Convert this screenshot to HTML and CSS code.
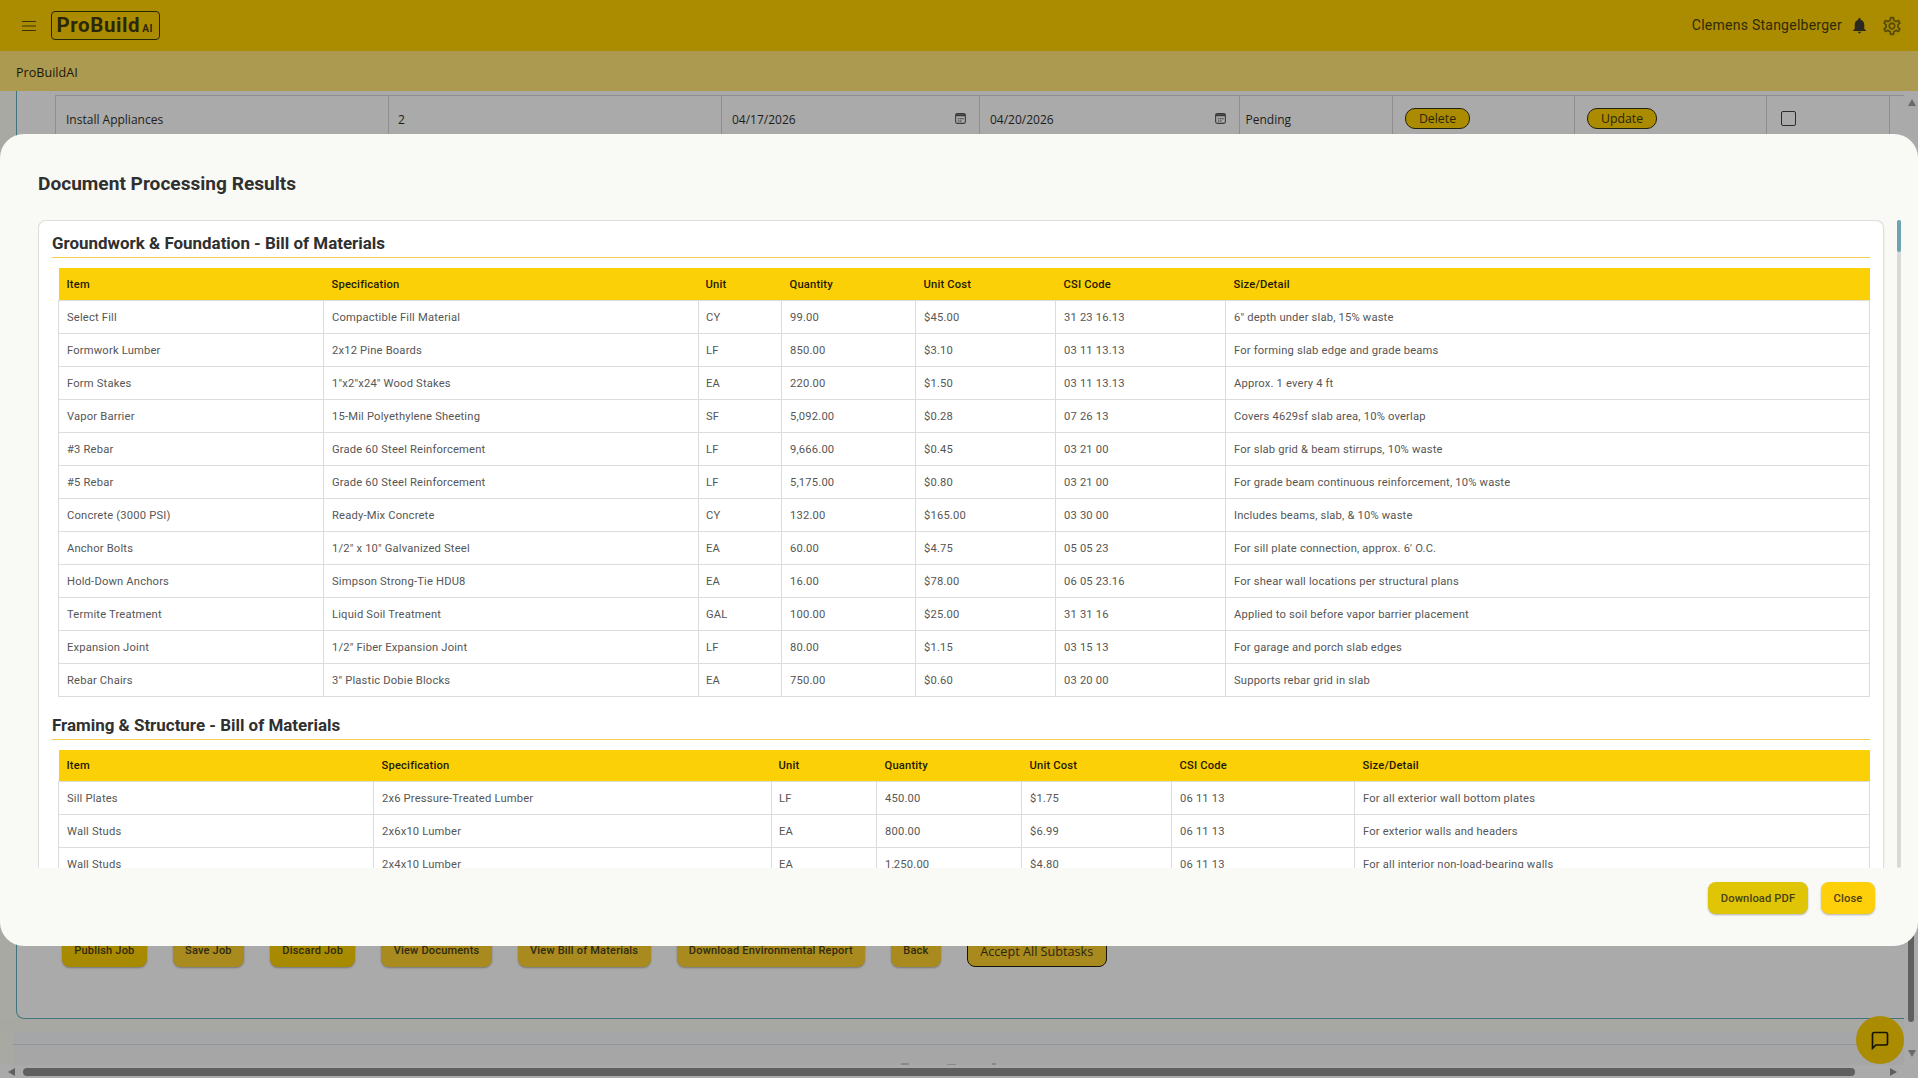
FILE: index.html
```html
<!DOCTYPE html>
<html lang="en">
<head>
<meta charset="utf-8">
<title>ProBuildAI</title>
<link rel="stylesheet" href="styles.css">
</head>
<body>
<div class="app">
  <header class="topbar">
    <svg class="menu-icon" viewBox="0 0 14 10" aria-hidden="true"><path d="M0 .5h14M0 5h14M0 9.500h14"/></svg>
    <div class="logo"><span class="logo-main">ProBuild</span><span class="logo-ai">AI</span></div>
    <div class="user">
      <span class="user-name">Clemens Stangelberger</span>
      <svg class="bell" viewBox="0 0 24 24" aria-hidden="true"><path d="M12 22c1.100 0 2-.9 2-2h-4c0 1.100.89 2 2 2zm6-6v-5c0-3.070-1.640-5.640-4.500-6.320V4c0-.83-.67-1.500-1.500-1.500s-1.500.67-1.500 1.500v.68C7.630 5.360 6 7.920 6 11v5l-2 2v1h16v-1l-2-2z"/></svg>
      <svg class="gear" viewBox="0 0 24 24" aria-hidden="true"><path d="M19.430 12.980c.04-.32.07-.64.07-.98 0-.34-.03-.66-.07-.98l2.110-1.650c.19-.15.24-.42.12-.64l-2-3.460c-.09-.16-.26-.25-.44-.25-.06 0-.12.01-.17.03l-2.490 1c-.52-.4-1.080-.73-1.690-.98l-.38-2.650C14.460 2.180 14.250 2 14 2h-4c-.25 0-.46.18-.49.42l-.38 2.650c-.61.25-1.170.59-1.690.98l-2.490-1c-.06-.02-.12-.03-.18-.03-.17 0-.34.09-.43.25l-2 3.460c-.13.22-.07.49.12.64l2.110 1.650c-.04.32-.07.65-.07.98 0 .33.03.66.07.98l-2.110 1.650c-.19.15-.24.42-.12.64l2 3.460c.09.16.26.25.44.25.06 0 .12-.01.17-.03l2.490-1c.52.4 1.080.73 1.690.98l.38 2.650c.03.24.24.42.49.42h4c.25 0 .46-.18.49-.42l.38-2.650c.61-.25 1.170-.59 1.690-.98l2.490 1c.06.02.12.03.18.03.17 0 .34-.09.43-.25l2-3.460c.12-.22.07-.49-.12-.64l-2.110-1.650zm-1.980-1.710c.04.31.05.52.05.73 0 .21-.02.43-.05.73l-.14 1.130.89.7 1.080.84-.7 1.210-1.270-.51-1.040-.42-.9.68c-.43.32-.84.56-1.250.73l-1.060.43-.16 1.130-.2 1.350h-1.400l-.19-1.350-.16-1.130-1.060-.43c-.43-.18-.83-.41-1.230-.71l-.91-.7-1.060.43-1.270.51-.7-1.210 1.080-.84.89-.7-.14-1.130c-.03-.31-.05-.54-.05-.74s.02-.43.05-.73l.14-1.130-.89-.7-1.080-.84.7-1.210 1.270.51 1.040.42.9-.68c.43-.32.84-.56 1.250-.73l1.060-.43.16-1.130.2-1.350h1.390l.19 1.350.16 1.130 1.060.43c.43.18.83.41 1.230.71l.91.7 1.060-.43 1.270-.51.7 1.210-1.070.85-.89.7.14 1.130zM12 8c-2.210 0-4 1.790-4 4s1.790 4 4 4 4-1.790 4-4-1.790-4-4-4zm0 6c-1.100 0-2-.9-2-2s.9-2 2-2 2 .9 2 2-.9 2-2 2z"/></svg>
    </div>
  </header>
  <div class="subbar">ProBuildAI</div>
  <div class="workspace">
    <div class="main">
      <section class="job-card">
        <div class="task-row">
          <div class="task-cell">Install Appliances</div>
          <div class="task-cell qty-cell">2</div>
          <div class="task-cell date-cell">04/17/2026
            <svg class="cal" viewBox="0 0 12 12" aria-hidden="true"><rect class="cal-line" x="1.500" y="1.500" width="9" height="9" rx="1.500"/><path class="cal-dots" d="M1.500 2h9v2h-9zM3.500 5.800h1.500v1h-1.500zM5.500 5.800h1.500v1h-1.500zM7.500 5.800h1.500v1h-1.500zM3.500 7.800h1.500v1h-1.500zM5.500 7.800h1.500v1h-1.500z"/></svg>
          </div>
          <div class="task-cell date-cell">04/20/2026
            <svg class="cal" viewBox="0 0 12 12" aria-hidden="true"><rect class="cal-line" x="1.500" y="1.500" width="9" height="9" rx="1.500"/><path class="cal-dots" d="M1.500 2h9v2h-9zM3.500 5.800h1.500v1h-1.500zM5.500 5.800h1.500v1h-1.500zM7.500 5.800h1.500v1h-1.500zM3.500 7.800h1.500v1h-1.500zM5.500 7.800h1.500v1h-1.500z"/></svg>
          </div>
          <div class="task-cell status-cell">Pending</div>
          <div class="task-cell btn-cell"><button class="pill pill-delete">Delete</button></div>
          <div class="task-cell btn-cell"><button class="pill pill-update">Update</button></div>
          <div class="task-cell check-cell"><span class="check"></span></div>
        </div>
        <div class="job-actions">
          <button class="job-btn strong">Publish Job</button>
          <button class="job-btn">Save Job</button>
          <button class="job-btn strong">Discard Job</button>
          <button class="job-btn">View Documents</button>
          <button class="job-btn">View Bill of Materials</button>
          <button class="job-btn">Download Environmental Report</button>
          <button class="job-btn">Back</button>
          <button class="accept-btn">Accept All Subtasks</button>
        </div>
      </section>
      <div class="band-a"></div>
      <div class="band-b"></div>
      <div class="band-c">
        <i class="mark m1"></i><i class="mark m2"></i><i class="mark m3"></i>
      </div>
      <div class="hscroll">
        <span class="arrow arrow-left"></span>
        <span class="hthumb"></span>
        <span class="arrow arrow-right"></span>
      </div>
    </div>
    <div class="vscroll">
      <span class="arrow arrow-up"></span>
      <span class="vthumb"></span>
      <span class="arrow arrow-down"></span>
    </div>
  </div>
</div>

<div class="modal">
  <h2 class="modal-title">Document Processing Results</h2>
  <div class="modal-body">
    <div class="results-card">
      <div class="section">
        <h3 class="section-title">Groundwork &amp; Foundation - Bill of Materials</h3>
        <table class="bom bom-a">
          <colgroup><col class="a1"><col class="a2"><col class="a3"><col class="a4"><col class="a5"><col class="a6"><col class="a7"></colgroup>
          <thead><tr><th>Item</th><th>Specification</th><th>Unit</th><th>Quantity</th><th>Unit Cost</th><th>CSI Code</th><th>Size/Detail</th></tr></thead>
          <tbody>
            <tr><td>Select Fill</td><td>Compactible Fill Material</td><td>CY</td><td>99.00</td><td>$45.00</td><td>31 23 16.13</td><td>6" depth under slab, 15% waste</td></tr>
            <tr><td>Formwork Lumber</td><td>2x12 Pine Boards</td><td>LF</td><td>850.00</td><td>$3.10</td><td>03 11 13.13</td><td>For forming slab edge and grade beams</td></tr>
            <tr><td>Form Stakes</td><td>1"x2"x24" Wood Stakes</td><td>EA</td><td>220.00</td><td>$1.50</td><td>03 11 13.13</td><td>Approx. 1 every 4 ft</td></tr>
            <tr><td>Vapor Barrier</td><td>15-Mil Polyethylene Sheeting</td><td>SF</td><td>5,092.00</td><td>$0.28</td><td>07 26 13</td><td>Covers 4629sf slab area, 10% overlap</td></tr>
            <tr><td>#3 Rebar</td><td>Grade 60 Steel Reinforcement</td><td>LF</td><td>9,666.00</td><td>$0.45</td><td>03 21 00</td><td>For slab grid &amp; beam stirrups, 10% waste</td></tr>
            <tr><td>#5 Rebar</td><td>Grade 60 Steel Reinforcement</td><td>LF</td><td>5,175.00</td><td>$0.80</td><td>03 21 00</td><td>For grade beam continuous reinforcement, 10% waste</td></tr>
            <tr><td>Concrete (3000 PSI)</td><td>Ready-Mix Concrete</td><td>CY</td><td>132.00</td><td>$165.00</td><td>03 30 00</td><td>Includes beams, slab, &amp; 10% waste</td></tr>
            <tr><td>Anchor Bolts</td><td>1/2" x 10" Galvanized Steel</td><td>EA</td><td>60.00</td><td>$4.75</td><td>05 05 23</td><td>For sill plate connection, approx. 6' O.C.</td></tr>
            <tr><td>Hold-Down Anchors</td><td>Simpson Strong-Tie HDU8</td><td>EA</td><td>16.00</td><td>$78.00</td><td>06 05 23.16</td><td>For shear wall locations per structural plans</td></tr>
            <tr><td>Termite Treatment</td><td>Liquid Soil Treatment</td><td>GAL</td><td>100.00</td><td>$25.00</td><td>31 31 16</td><td>Applied to soil before vapor barrier placement</td></tr>
            <tr><td>Expansion Joint</td><td>1/2" Fiber Expansion Joint</td><td>LF</td><td>80.00</td><td>$1.15</td><td>03 15 13</td><td>For garage and porch slab edges</td></tr>
            <tr><td>Rebar Chairs</td><td>3" Plastic Dobie Blocks</td><td>EA</td><td>750.00</td><td>$0.60</td><td>03 20 00</td><td>Supports rebar grid in slab</td></tr>
          </tbody>
        </table>
      </div>
      <div class="section">
        <h3 class="section-title">Framing &amp; Structure - Bill of Materials</h3>
        <table class="bom bom-b">
          <colgroup><col class="b1"><col class="b2"><col class="b3"><col class="b4"><col class="b5"><col class="b6"><col class="b7"></colgroup>
          <thead><tr><th>Item</th><th>Specification</th><th>Unit</th><th>Quantity</th><th>Unit Cost</th><th>CSI Code</th><th>Size/Detail</th></tr></thead>
          <tbody>
            <tr><td>Sill Plates</td><td>2x6 Pressure-Treated Lumber</td><td>LF</td><td>450.00</td><td>$1.75</td><td>06 11 13</td><td>For all exterior wall bottom plates</td></tr>
            <tr><td>Wall Studs</td><td>2x6x10 Lumber</td><td>EA</td><td>800.00</td><td>$6.99</td><td>06 11 13</td><td>For exterior walls and headers</td></tr>
            <tr><td>Wall Studs</td><td>2x4x10 Lumber</td><td>EA</td><td>1,250.00</td><td>$4.80</td><td>06 11 13</td><td>For all interior non-load-bearing walls</td></tr>
          </tbody>
        </table>
      </div>
    </div>
    <div class="modal-scroll"><span class="modal-thumb"></span></div>
  </div>
  <div class="modal-actions">
    <button class="modal-btn download">Download PDF</button>
    <button class="modal-btn close">Close</button>
  </div>
</div>

<button class="chat-fab" aria-label="Chat">
  <svg viewBox="0 0 24 24" aria-hidden="true"><path d="M5 3h14a2 2 0 0 1 2 2v11a2 2 0 0 1-2 2H7l-4 4V5a2 2 0 0 1 2-2z"/></svg>
</button>
</body>
</html>
```
FILE: styles.css
```css
* { box-sizing: border-box; }
html, body { margin: 0; height: 100%; overflow: hidden; }
body { font-family: Roboto, "Liberation Sans", sans-serif; background: #aaaaaa; position: relative; }
button { font-family: inherit; cursor: pointer; }

.app { display: flex; flex-direction: column; height: 100vh; }

.topbar { height: 51px; flex: none; background: #ab8c00; display: flex; align-items: center; padding-left: 22px; padding-right: 15px; }
.menu-icon { width: 14px; height: 10px; fill: none; stroke: #3a3408; stroke-width: 1; flex: none; }
.logo { margin-left: 14.500px; width: 109px; height: 29px; border: 1.500px solid #2a2608; border-radius: 4px; display: flex; align-items: baseline; padding: 2px 0 0 5px; color: #2b2708; }
.logo-main { font-weight: 700; font-size: 20.500px; line-height: 23px; letter-spacing: .6px; }
.logo-ai { font-weight: 700; font-size: 10px; margin-left: 2px; letter-spacing: .5px; }
.user { margin-left: auto; display: flex; align-items: center; color: #2f2a06; }
.user-name { font-size: 14px; letter-spacing: .25px; margin-bottom: 2px; }
.bell { width: 19px; height: 19px; margin-left: 8px; fill: #2c2a20; }
.gear { width: 22px; height: 22px; margin-left: 12px; fill: #5a4d05; }

.subbar { height: 40px; flex: none; background: #ad9a51; padding: 2px 0 0 16px; display: flex; align-items: center; font-family: "Open Sans", sans-serif; font-size: 12.600px; color: #1b1808; }

.workspace { flex: 1; display: flex; min-height: 0; }
.main { flex: 1; display: flex; flex-direction: column; min-width: 0; background: #a9a9a4; }

.job-card { flex: 1; margin-left: 16px; background: #aaaaaa; border: 1px solid #40757f; border-width: 0 0 1px 1px; border-bottom-left-radius: 8px; display: flex; flex-direction: column; padding-left: 38px; }
.task-row { margin-top: 4px; display: grid; grid-template-columns: 333px 333px 258px 259.500px 153px 182px 192.500px 123.500px; border-top: 1px solid #8e8e8e; height: 60px; font-family: "Open Sans", sans-serif; font-size: 12px; color: #1d1d1b; }
.task-cell { border-left: 1px solid #8e8e8e; padding: 15px 10px 0; line-height: 17px; }
.task-cell:last-child { border-right: 1px solid #8e8e8e; }
.qty-cell { padding-left: 9px; }
.status-cell { padding-left: 6px; }
.date-cell { display: flex; justify-content: space-between; align-items: flex-start; padding-right: 12px; }
.cal { width: 13px; height: 13px; margin-top: 1px; flex: none; }
.cal-line { fill: none; stroke: #3a3a38; stroke-width: 1; }
.cal-dots { fill: #3a3a38; }
.btn-cell { padding: 12px 0 0 12.500px; }
.pill { height: 21px; border: 1px solid #22200f; border-radius: 10px; background: #ab8c00; color: #2a2608; font-family: "Open Sans", sans-serif; font-size: 12.300px; padding: 0; display: block; }
.pill-delete { width: 65px; }
.pill-update { width: 70px; }
.check-cell { padding: 15px 0 0 14px; }
.check { display: block; width: 15px; height: 15px; border: 1px solid #2b2b2b; border-radius: 2px; }

.job-actions { margin-top: auto; display: flex; gap: 26px; align-items: flex-end; padding: 0 0 51px 7px; }
.job-btn { height: 36px; border: 0; border-radius: 8px; background: #a98a1e; color: #2f2a10; font-size: 11px; font-weight: 500; letter-spacing: .2px; padding: 2px 12.300px 0; box-shadow: 0 1px 2px rgba(0,0,0,.3); white-space: nowrap; }
.job-btn.strong { background: #a88a00; }
.accept-btn { height: 36px; border: 1px solid #15140a; border-radius: 8px; background: #a98a1e; color: #2b2610; font-family: "Open Sans", sans-serif; font-size: 12.640px; padding: 4px 12.500px 0; white-space: nowrap; }

.band-a { height: 13px; flex: none; background: #a8a8a3; }
.band-b { height: 12px; flex: none; background: #a5a6a8; margin-left: 13px; }
.band-c { height: 21px; flex: none; margin-left: 13px; background: #a6a6a6; border-top: 1px solid #959595; display: flex; align-items: flex-end; }
.mark { display: block; background: #8a8a8a; }
.m1 { width: 8px; height: 2px; margin-left: 888px; }
.m2 { width: 9px; height: 1px; margin-left: 38px; }
.m3 { width: 4px; height: 2px; margin-left: 36px; }
.hscroll { height: 13px; flex: none; background: #aaaaaa; display: flex; align-items: center; padding: 0 7px 0 8px; }
.hthumb { width: 1832px; height: 8px; margin-left: 8px; background: #5f5f5f; border-radius: 4px; }
.arrow { display: block; width: 0; height: 0; border-style: solid; border-color: transparent; }
.arrow-left { border-width: 4px 7px 4px 0; border-right-color: #5f5f5f; }
.arrow-right { margin-left: 35px; border-width: 4px 0 4px 7px; border-left-color: #5f5f5f; }

.vscroll { width: 14px; flex: none; background: #aaaaaa; display: flex; flex-direction: column; align-items: center; padding-top: 8px; padding-bottom: 21px; }
.arrow-up { margin-left: 2px; border-width: 0 4px 7px; border-bottom-color: #6a6a6a; }
.vthumb { width: 6px; margin-top: 94px; height: 822px; background: #5f5f5f; border-radius: 3px; }
.arrow-down { margin-top: auto; margin-left: 2px; border-width: 7px 4px 0; border-top-color: #6a6a6a; }

.modal { position: absolute; left: 0; right: 0; top: 134px; height: 812px; background: #f9faf5; border-radius: 24px; display: flex; flex-direction: column; }
.modal-title { margin: 0; height: 86px; padding: 38px 0 0 38px; font-size: 19.100px; line-height: 24px; font-weight: 700; color: #303030; }
.modal-body { height: 648px; flex: none; display: flex; margin-left: 38px; margin-right: 17px; overflow: hidden; }
.results-card { width: 1846px; flex: none; height: 100%; overflow: hidden; background: #fff; border: 1px solid #dedede; border-bottom: 0; border-radius: 8px 8px 0 0; padding: 0 13px; box-shadow: 0 1px 3px rgba(0,0,0,.08); }
.modal-scroll { width: 4px; margin-left: 13px; background: #d9d9d9; flex: none; border-radius: 2px; }
.modal-thumb { display: block; height: 32px; background: #6ea3b0; border-radius: 2px; }
.section { padding-top: 10px; }
.section + .section { padding-top: 16px; }
.section-title { margin: 0 0 10px; padding-bottom: 2px; border-bottom: 1px solid #f3cf4e; font-size: 16.960px; line-height: 24px; font-weight: 700; color: #303030; }
.bom { border-collapse: collapse; table-layout: fixed; margin-left: 6px; width: 1811px; font-size: 11.200px; letter-spacing: .18px; }
.bom th { height: 32px; background: #fbd007; color: #1f1a00; font-weight: 500; text-align: left; padding: 0 8px; }
.bom td { height: 33px; border: 1px solid #dcdcdc; color: #565656; padding: 0 8px; }
.bom-a th, .bom-a td { padding-top: 2px; }
.bom th:nth-child(3), .bom td:nth-child(3) { padding-left: 7px; }
.a1 { width: 265px; } .a2 { width: 375px; } .a3 { width: 83px; } .a4 { width: 134px; } .a5 { width: 140px; } .a6 { width: 170px; } .a7 { width: 644px; }
.b1 { width: 315px; } .b2 { width: 398px; } .b3 { width: 105px; } .b4 { width: 145px; } .b5 { width: 150px; } .b6 { width: 183px; } .b7 { width: 515px; }

.modal-actions { display: flex; justify-content: flex-end; gap: 13px; padding: 14px 43px 0 0; }
.modal-btn { height: 32px; border: 0; border-radius: 8px; font-size: 11.200px; font-weight: 500; letter-spacing: .1px; color: #4a4015; box-shadow: 0 1px 2px rgba(0,0,0,.3); padding: 0; }
.download { width: 100px; background: #dfc505; }
.close { width: 54px; background: #fdd00a; }

.chat-fab { position: absolute; left: 1856px; top: 1016px; width: 48px; height: 48px; border: 0; border-radius: 50%; background: #ab8c00; padding: 14px; }
.chat-fab svg { display: block; width: 20px; height: 20px; fill: none; stroke: #141200; stroke-width: 2; }
```
